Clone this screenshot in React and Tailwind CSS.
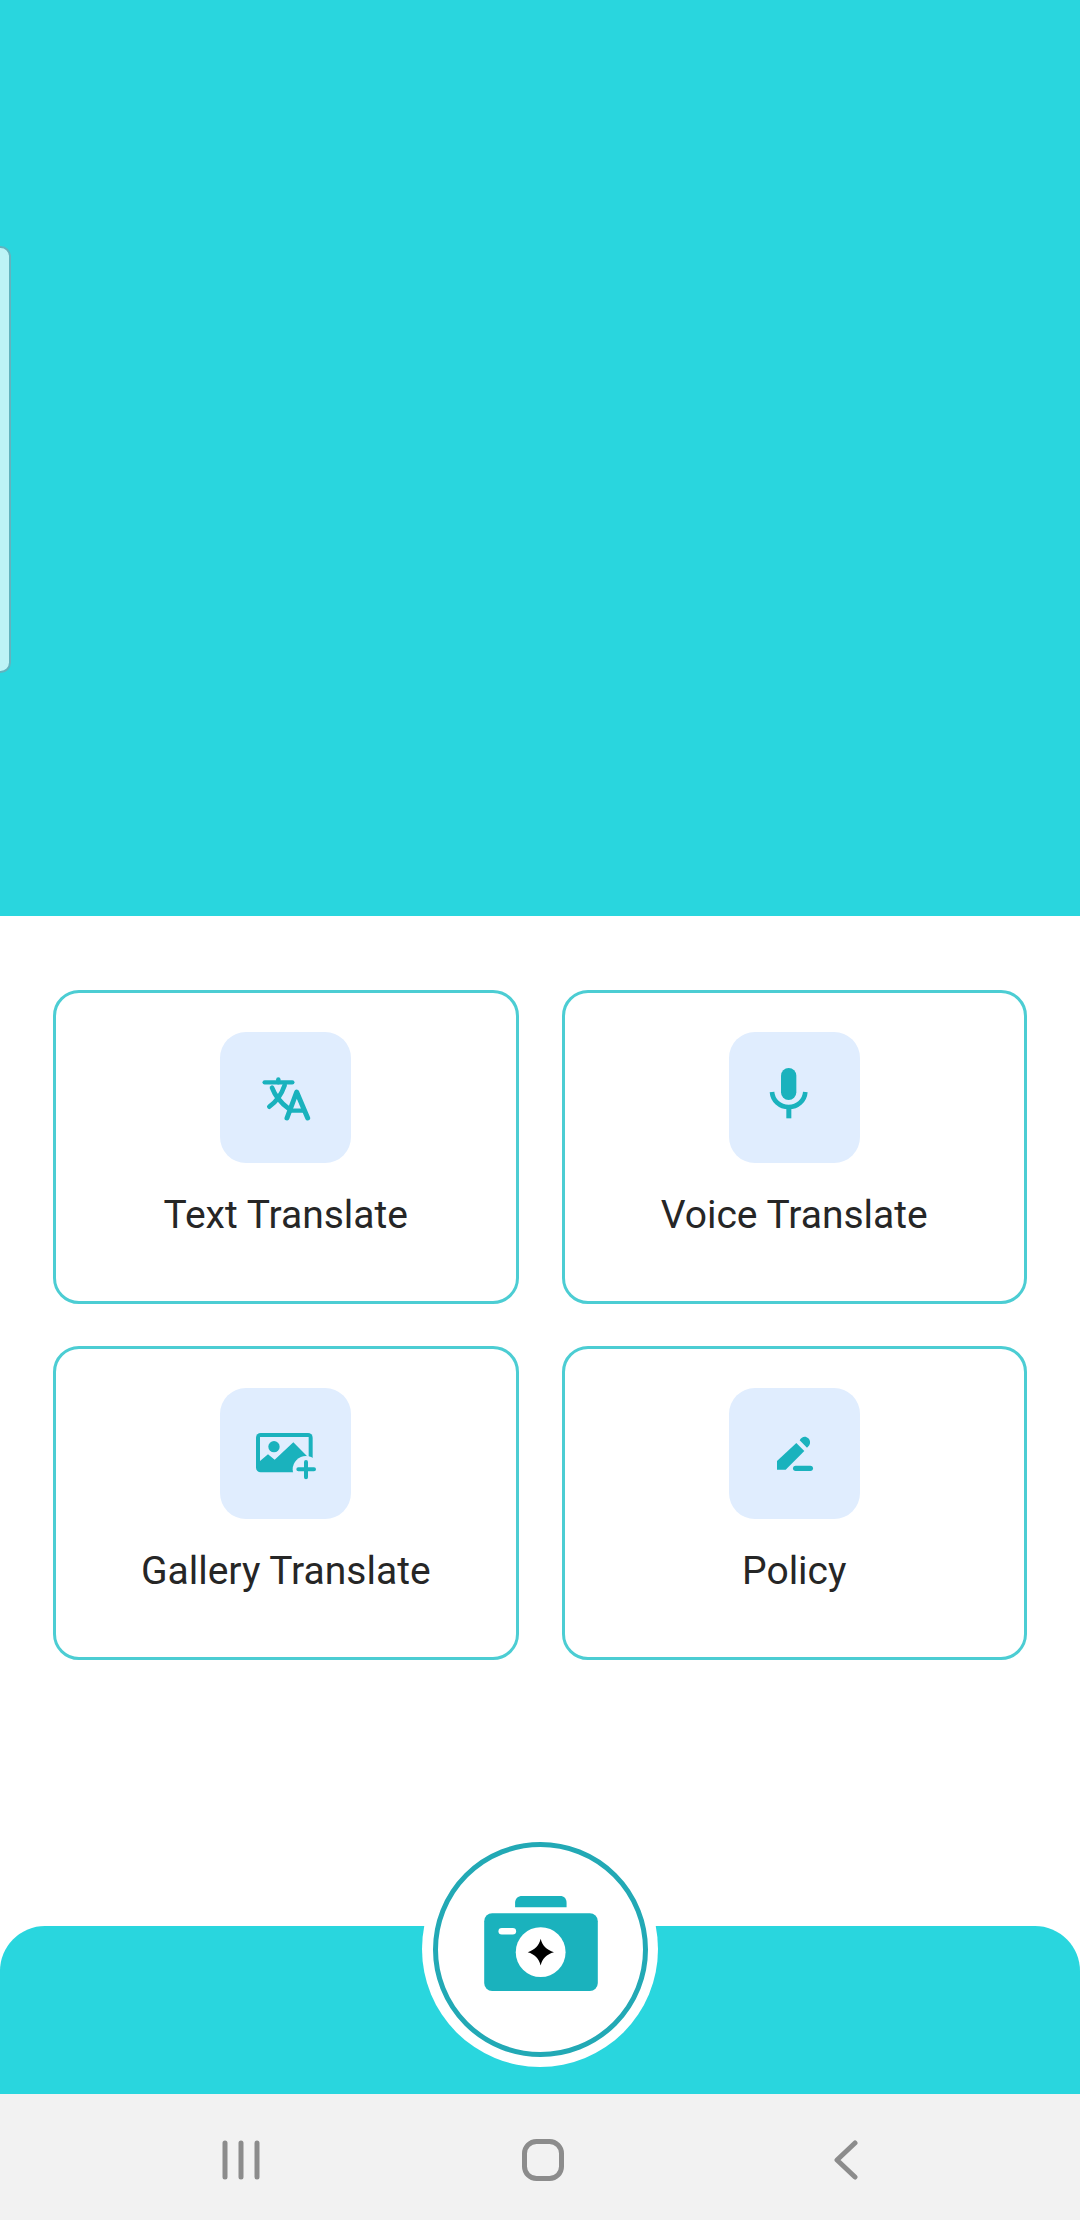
import { useState } from 'react';

const TEAL_ICON = '#1ab2bd';
const ICON_BG = '#e0edfe';

const TextIcon = () => (
    <svg viewBox="-60 -54 393 393" className="w-full h-full" fill="none" stroke={TEAL_ICON} strokeLinecap="round" strokeLinejoin="round">
        <path d="M74 97H157" strokeWidth="13" />
        <path d="M115 88V97" strokeWidth="13" />
        <path d="M96 113C106 140 124 160 146 176" strokeWidth="14" />
        <path d="M134 106C124 135 110 155 88 170" strokeWidth="14" />
        <path d="M141 204L170 126L203 204" strokeWidth="15" />
        <path d="M152 182H192" strokeWidth="13" />
    </svg>
);

const MicIcon = () => (
    <svg viewBox="-36 -54 393 393" className="w-full h-full" fill={TEAL_ICON}>
        <rect x="120" y="54" width="46" height="96" rx="23" />
        <path d="M93 126C95 152 116 171 143 171C170 171 191 152 193 126" fill="none" stroke={TEAL_ICON} strokeWidth="14" />
        <rect x="136" y="168" width="15" height="37" />
    </svg>
);

const GalleryIcon = () => (
    <svg viewBox="-60 -39 393 393" className="w-full h-full">
        <rect x="48" y="96" width="170" height="118" rx="14" fill={TEAL_ICON} />
        <path d="M60 108H206V170L160 124L104 176L84 160L60 180Z" fill={ICON_BG} />
        <circle cx="102" cy="137" r="17" fill={TEAL_ICON} />
        <circle cx="198" cy="205" r="40" fill={ICON_BG} />
        <path d="M198 183V229M175 205H222" stroke={TEAL_ICON} strokeWidth="12" strokeLinecap="round" />
    </svg>
);

const PolicyIcon = () => (
    <svg viewBox="-36 -39 393 393" className="w-full h-full" fill={TEAL_ICON}>
        <path d="M108 206V180L166 126L190 150L134 206Z" />
        <path d="M176 118C182 106 194 104 202 112C210 120 209 132 198 140Z" />
        <rect x="156" y="194" width="60" height="16" rx="8" />
    </svg>
);

const CameraIcon = () => (
    <svg viewBox="0 0 342 286" className="w-[114px] h-[95px] mb-[11px] ml-[2px]">
        <path d="M93 34V20C93 8 102 0 114 0H229C240 0 248 8 248 20V34Z" fill={TEAL_ICON} />
        <rect x="0" y="52" width="342" height="234" rx="24" fill={TEAL_ICON} />
        <rect x="43" y="96" width="53" height="20" rx="10" fill="#fff" />
        <circle cx="170" cy="169" r="75" fill="#fff" />
        <path d="M170 129C175 150 188 163 210 169C188 175 175 188 170 209C165 188 152 175 131 169C152 163 165 150 170 129Z" fill="#000" />
    </svg>
);

const items = [
    { label: 'Text Translate', icon: <TextIcon /> },
    { label: 'Voice Translate', icon: <MicIcon /> },
    { label: 'Gallery Translate', icon: <GalleryIcon /> },
    { label: 'Policy', icon: <PolicyIcon /> },
];

const App = () => {
    const [active, setActive] = useState(null);

    return (
        <div className="relative flex flex-col w-[1080px] h-[2220px] bg-white overflow-hidden font-['Roboto',sans-serif]">
            <div className="relative h-[916px] shrink-0 bg-[#29d6de]">
                <div className="absolute left-[-10px] top-[246px] w-[21px] h-[427px] rounded-[12px] bg-[#bdf3f6] border-2 border-[#62b3be]"></div>
            </div>

            <div className="grid grid-cols-2 gap-x-[43px] gap-y-[42px] pt-[74px] px-[53px]">
                {items.map((item) => (
                    <button
                        key={item.label}
                        onClick={() => setActive(item.label)}
                        className={`flex flex-col items-center h-[314px] pt-[39px] rounded-[26px] border-[3px] border-[#4ccdd3] ${active === item.label ? 'bg-gray-50' : 'bg-white'}`}
                    >
                        <span className="block w-[131px] h-[131px] rounded-[26px] bg-[#e0edfe] overflow-hidden">{item.icon}</span>
                        <span className="mt-[28px] text-[39px] leading-[48px] text-[#262626]">{item.label}</span>
                    </button>
                ))}
            </div>

            <div className="flex-1"></div>

            <div className="relative h-[168px] shrink-0 rounded-t-[45px] bg-[#29d6de]">
                <div className="absolute left-[422px] top-[-95px] flex items-center justify-center w-[236px] h-[236px] rounded-full bg-white">
                    <button className="flex items-center justify-center w-[215px] h-[215px] rounded-full border-[5px] border-[#22a9b5] bg-white">
                        <CameraIcon />
                    </button>
                </div>
            </div>

            <div className="flex items-center h-[126px] pl-[222px] pt-[6px] shrink-0 bg-[#f2f2f2]">
                <svg viewBox="0 0 38 40" className="w-[38px] h-[40px]" stroke="#8c8c8c" strokeWidth="5" strokeLinecap="round">
                    <path d="M3 3V37M19 3V37M35 3V37" />
                </svg>
                <svg viewBox="0 0 42 42" className="w-[42px] h-[42px] ml-[262px]" fill="none" stroke="#8c8c8c" strokeWidth="5">
                    <rect x="2.5" y="2.5" width="37" height="37" rx="12" />
                </svg>
                <svg viewBox="0 0 24 40" className="w-[24px] h-[40px] ml-[270px]" fill="none" stroke="#8c8c8c" strokeWidth="5" strokeLinecap="round" strokeLinejoin="round">
                    <path d="M21 3L3 20L21 37" />
                </svg>
            </div>
        </div>
    );
};

export default App;
